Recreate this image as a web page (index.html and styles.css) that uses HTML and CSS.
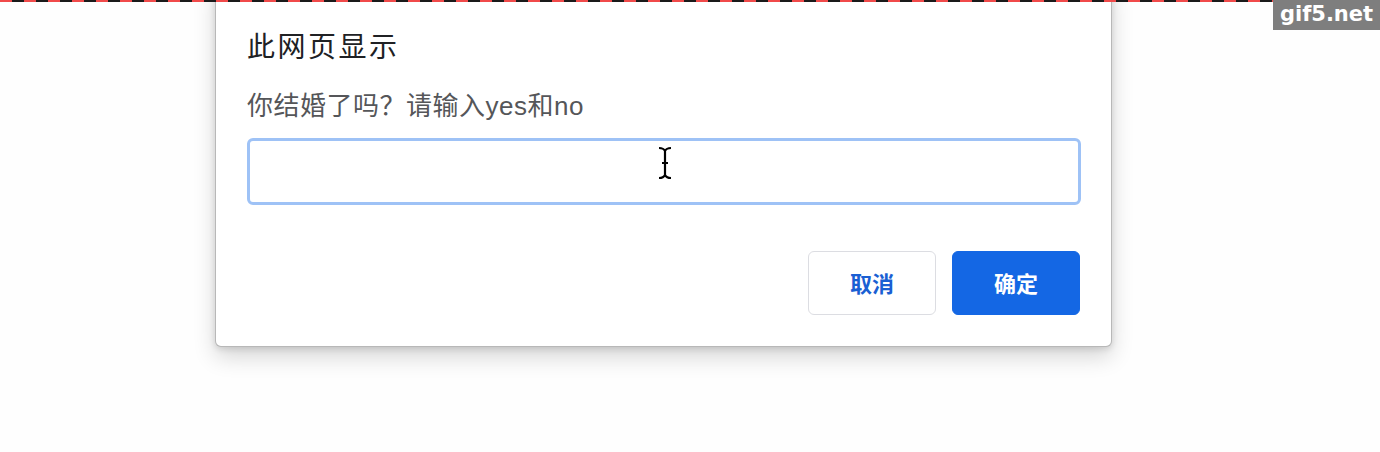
FILE: index.html
```html
<!DOCTYPE html>
<html lang="zh-CN">
<head>
<meta charset="utf-8">
<title>此网页显示</title>
<link rel="stylesheet" href="styles.css">
</head>
<body>
<div class="page">
  <div class="dash-line"></div>
  <div class="watermark">gif5.net</div>
  <div class="dialog">
    <div class="title">此网页显示</div>
    <div class="message">你结婚了吗？请输入yes和no</div>
    <div class="field">
      <input class="prompt-input" type="text" aria-label="输入">
      <svg class="ibeam" width="16" height="34" viewBox="0 0 16 34" aria-hidden="true">
        <path d="M2 2 C5 2 7 3 8 5 C9 3 11 2 14 2 M8 5 V29 M2 32 C5 32 7 31 8 29 C9 31 11 32 14 32 M5 17 H11" fill="none" stroke="#000" stroke-width="2.2"/>
      </svg>
    </div>
    <div class="actions">
      <button class="btn btn-cancel">取消</button>
      <button class="btn btn-ok">确定</button>
    </div>
  </div>
</div>
</body>
</html>
```

FILE: styles.css
```css
html, body {
  margin: 0;
  padding: 0;
  background: #fefefe;
  font-family: "Liberation Sans", "Noto Sans CJK SC", sans-serif;
  overflow: hidden;
}

.page {
  position: relative;
  width: 1380px;
  height: 452px;
  display: flex;
  flex-direction: column;
}

.dash-line {
  position: absolute;
  left: 0;
  top: 0;
  width: 100%;
  height: 2px;
  background: repeating-linear-gradient(90deg, #f04a4a 0 12px, #1a1a1a 12px 24px);
  z-index: 5;
}

.watermark {
  position: absolute;
  right: 0;
  top: 0;
  width: 107px;
  height: 30px;
  background: #7e7e7e;
  color: #fff;
  font-family: "DejaVu Sans", "Liberation Sans", sans-serif;
  font-weight: bold;
  font-size: 21px;
  line-height: 28px;
  text-align: center;
  z-index: 6;
}

.dialog {
  box-sizing: border-box;
  width: 897px;
  margin-top: -20px;
  margin-left: 215px;
  padding: 46px 30px 31px 31px;
  background: #fff;
  border: 1px solid rgba(0, 0, 0, 0.28);
  border-radius: 6px;
  box-shadow: 0 10px 22px rgba(0, 0, 0, 0.16), 0 2px 6px rgba(0, 0, 0, 0.12);
  display: flex;
  flex-direction: column;
}

.title {
  font-family: "Noto Sans CJK SC", sans-serif;
  font-size: 28px;
  line-height: 36px;
  color: #202124;
  letter-spacing: 2.5px;
}

.message {
  margin-top: 26px;
  font-size: 26px;
  line-height: 34px;
  color: #555659;
  letter-spacing: 0.5px;
}

.field {
  position: relative;
  margin-top: 15px;
}

.prompt-input {
  box-sizing: border-box;
  display: block;
  width: 834px;
  height: 67px;
  border: 3px solid #9ec2f6;
  border-radius: 6px;
  background: #fff;
  outline: none;
  padding: 0 12px;
  font-size: 22px;
}

.ibeam {
  position: absolute;
  left: 410px;
  top: 8px;
}

.actions {
  margin-top: 46px;
  margin-right: 1px;
  display: flex;
  justify-content: flex-end;
  gap: 16px;
}

.btn {
  box-sizing: border-box;
  width: 128px;
  height: 64px;
  border-radius: 6px;
  padding: 0 0 3px 0;
  font-family: "Noto Sans CJK SC", sans-serif;
  font-size: 22px;
  font-weight: bold;
  cursor: pointer;
}

.btn-cancel {
  background: #fff;
  border: 1px solid #dcdde2;
  color: #1a5fd3;
}

.btn-ok {
  background: #1467e4;
  border: 1px solid #1467e4;
  color: #fff;
}
```
